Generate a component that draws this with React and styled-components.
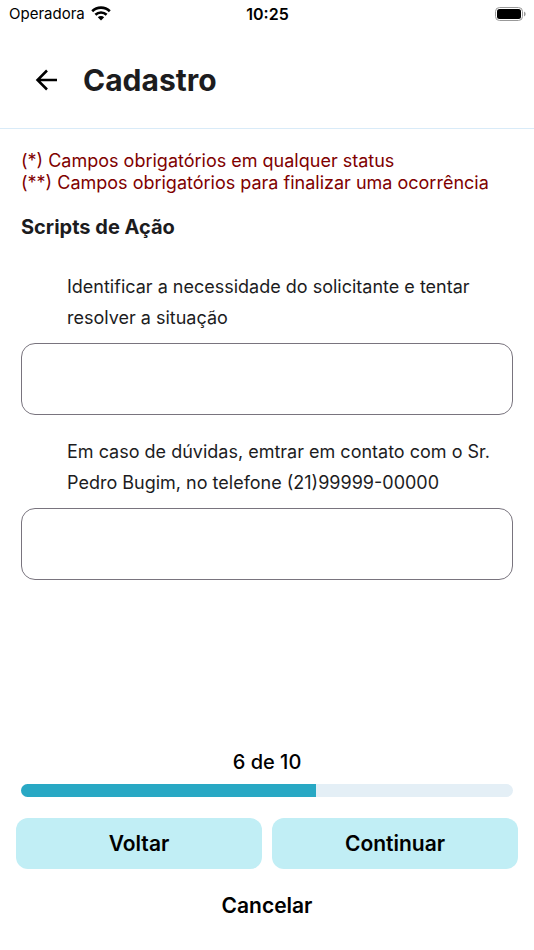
import React, { useState } from "react";
import styled, { createGlobalStyle } from "styled-components";

const GlobalStyle = createGlobalStyle`
  *, *::before, *::after { box-sizing: border-box; }
  body {
    margin: 0;
    background: #fff;
    color: #1c1c1e;
    font-family: Inter, "Liberation Sans", sans-serif;
  }
  button, textarea { font: inherit; color: inherit; }
`;

const Screen = styled.div`
  display: flex;
  flex-direction: column;
  min-height: 100vh;
`;

const StatusBar = styled.div`
  display: grid;
  grid-template-columns: 1fr auto 1fr;
  align-items: center;
  height: 27px;
  padding: 0 8px 0 9px;
  color: #000;
  font-size: 15px;
`;

const Carrier = styled.div`
  display: flex;
  align-items: center;
  gap: 6px;
`;

const Clock = styled.time`
  font-size: 16px;
  font-weight: 600;
`;

const Battery = styled.svg`
  justify-self: end;
`;

const Header = styled.header`
  display: flex;
  align-items: center;
  gap: 21px;
  height: 102px;
  padding: 4px 32px 0;
  border-bottom: 1px solid #d9ebf8;
`;

const BackButton = styled.button`
  display: flex;
  padding: 0;
  border: 0;
  background: none;
  color: #000;
  cursor: pointer;
`;

const Title = styled.h1`
  margin: 0;
  font-size: 30px;
  line-height: 36px;
  font-weight: 700;
`;

const Content = styled.main`
  flex: 1;
  padding: 21px 21px 0;
`;

const Notice = styled.p`
  margin: 0;
  color: #800000;
  font-size: 18px;
  line-height: 22px;
`;

const SectionTitle = styled.h2`
  margin: 20px 0 31px;
  font-size: 20px;
  line-height: 26px;
  font-weight: 700;
`;

const Field = styled.div`
  display: flex;
  flex-direction: column;
  margin-bottom: 21px;
`;

const FieldLabel = styled.label`
  padding: 0 20px 10px 46px;
  font-size: 18px;
  line-height: 31px;
`;

const Answer = styled.textarea`
  width: 100%;
  height: 72px;
  padding: 12px 16px;
  border: 1px solid #79747e;
  border-radius: 14px;
  background: #fff;
  font-size: 18px;
  resize: none;
`;

const Footer = styled.footer`
  display: flex;
  flex-direction: column;
  gap: 21px;
  padding: 0 16px 30px;
  color: #000;
`;

const Progress = styled.div`
  display: flex;
  flex-direction: column;
  gap: 9px;
  padding: 0 5px;
  text-align: center;
  font-size: 20px;
  line-height: 26px;
  font-weight: 500;
`;

const Track = styled.div`
  height: 13px;
  overflow: hidden;
  border-radius: 7px;
  background: #e4eff6;
`;

const Bar = styled.div`
  height: 100%;
  background: #28a8c4;
`;

const Actions = styled.div`
  display: grid;
  grid-template-columns: 1fr 1fr;
  gap: 10px;
`;

const ActionButton = styled.button`
  height: ${(p) => (p.$plain ? "30px" : "51px")};
  padding: 0 16px;
  border: 0;
  border-radius: 12px;
  background: ${(p) => (p.$plain ? "none" : "#c1eef5")};
  font-size: 21px;
  font-weight: 600;
  cursor: pointer;
`;

const questions = [
  "Identificar a necessidade do solicitante e tentar resolver a situação",
  "Em caso de dúvidas, emtrar em contato com o Sr. Pedro Bugim, no telefone (21)99999-00000",
];

const TOTAL = 10;

export default function App() {
  const [step, setStep] = useState(6);

  return (
    <Screen>
      <GlobalStyle />
      <StatusBar>
        <Carrier>
          Operadora
          <svg width="20" height="15" viewBox="0 0 20 15" fill="none" stroke="#000" strokeWidth="2.6" aria-hidden="true">
            <path d="M1.2 5.2a12.6 12.6 0 0 1 17.6 0" />
            <path d="M4.4 8.7a8.1 8.1 0 0 1 11.2 0" />
            <path d="M10 14.6 6.8 11.3a4.6 4.6 0 0 1 6.4 0Z" fill="#000" stroke="none" />
          </svg>
        </Carrier>
        <Clock>10:25</Clock>
        <Battery width="31" height="14" viewBox="0 0 31 14" aria-hidden="true">
          <rect x="0.5" y="0.5" width="27" height="13" rx="4" fill="none" stroke="#999" />
          <rect x="2" y="2" width="24" height="10" rx="2.5" />
          <path d="M29 4.5a2.7 2.7 0 0 1 0 5Z" fill="#999" />
        </Battery>
      </StatusBar>

      <Header>
        <BackButton type="button" aria-label="Voltar à tela anterior">
          <svg width="30" height="30" viewBox="0 0 30 30" fill="none" stroke="currentColor" strokeWidth="2.5" aria-hidden="true">
            <path d="M25 15H6M15 5.5 5.5 15l9.5 9.5" />
          </svg>
        </BackButton>
        <Title>Cadastro</Title>
      </Header>

      <Content>
        <Notice>(*) Campos obrigatórios em qualquer status</Notice>
        <Notice>(**) Campos obrigatórios para finalizar uma ocorrência</Notice>
        <SectionTitle>Scripts de Ação</SectionTitle>
        {questions.map((text, i) => (
          <Field key={text}>
            <FieldLabel htmlFor={`answer-${i}`}>{text}</FieldLabel>
            <Answer id={`answer-${i}`} />
          </Field>
        ))}
      </Content>

      <Footer>
        <Progress>
          <span>{step} de {TOTAL}</span>
          <Track role="progressbar" aria-valuenow={step} aria-valuemin={0} aria-valuemax={TOTAL} aria-label="Progresso">
            <Bar style={{ width: `${(step / TOTAL) * 100}%` }} />
          </Track>
        </Progress>
        <Actions>
          <ActionButton type="button" onClick={() => setStep((s) => Math.max(1, s - 1))}>Voltar</ActionButton>
          <ActionButton type="button" onClick={() => setStep((s) => Math.min(TOTAL, s + 1))}>Continuar</ActionButton>
        </Actions>
        <ActionButton type="button" $plain>Cancelar</ActionButton>
      </Footer>
    </Screen>
  );
}
